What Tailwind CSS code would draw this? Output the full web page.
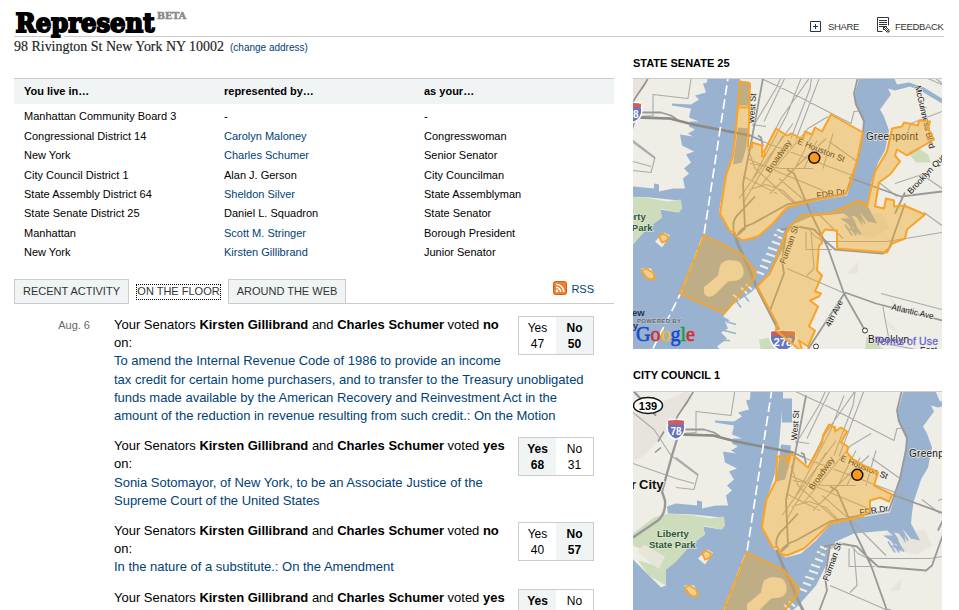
<!DOCTYPE html>
<html lang="en">
<head>
<meta charset="utf-8">
<title>Represent</title>
<script src="https://cdn.jsdelivr.net/npm/@tailwindcss/browser@4"></script>
</head>
<body class="bg-white text-black font-['Liberation_Sans',Arial,sans-serif] w-[959px] h-[610px] overflow-hidden">

<header class="ml-[14px] w-[930px] h-[37px] border-b border-[#ccc] flex justify-between">
  <svg class="overflow-visible" width="180" height="37" viewBox="0 0 180 37">
    <path d="M37 36.500h13" stroke="#fff" stroke-width="2"/>
    <text x="1.500" y="31.500" font-family="DejaVu Serif" font-weight="bold" font-size="25.500" textLength="139" lengthAdjust="spacingAndGlyphs" stroke="#000" stroke-width="1.900">Represent</text>
    <text x="143" y="18.500" font-family="DejaVu Serif" font-weight="bold" font-size="9.500" textLength="29" lengthAdjust="spacingAndGlyphs" fill="#888" stroke="#888" stroke-width=".5">BETA</text>
  </svg>
  <div class="flex items-start text-[9.5px] leading-[12px] tracking-[-0.35px] text-[#333]">
    <svg class="mt-[21px]" width="11" height="11" viewBox="0 0 11 11"><path d="M.5.5h10v10H.5z" fill="#fff" stroke="#333"/><path d="M3 5.500h5M5.500 3v5" stroke="#004276"/></svg>
    <span class="ml-[7px] mt-[21px] w-[49px]">SHARE</span>
    <svg class="mt-[17px]" width="13" height="16" viewBox="0 0 13 16"><path d="M5.500 14.500h-5V.5h11v8" fill="none" stroke="#333"/><path d="M2 3.500h8M2 5.500h8M2 7.500h8M2 9.500h4" stroke="#333"/><path d="M6 9.500h4M6.500 9v4M7 10l4.500 4.500M9 10l3 3v2h-2l-3-3" fill="none" stroke="#333"/></svg>
    <span class="ml-[5px] mt-[21px] w-[49px]">FEEDBACK</span>
  </div>
</header>

<div class="flex ml-[14px] h-[573px] overflow-hidden">
  <main class="w-[600px]">
    <div class="h-[41px] flex items-start text-[#333] pt-[1px]">
      <svg class="overflow-visible" width="216" height="18"><text x="0" y="13" font-family="Liberation Serif" font-size="14.500" fill="#222" stroke="#222" stroke-width=".15" textLength="210" lengthAdjust="spacingAndGlyphs">98 Rivington St New York NY 10002</text></svg>
      <a class="text-[10px] leading-[12px] mt-[4px] text-[#004276] whitespace-nowrap">(change address)</a>
    </div>

    <section class="text-[11px] h-[201px]">
      <div class="grid grid-cols-[200px_200px_1fr] h-[26px] border-t border-[#ccc] bg-[#f0f4f5] pl-[10px] font-bold leading-[25px] mb-[3px]">
        <span>You live in…</span><span>represented by…</span><span>as your…</span>
      </div>
      <div class="grid grid-cols-[200px_200px_1fr] pl-[10px] pt-[0.3px] leading-[19.4px]">
        <span>Manhattan Community Board 3</span><span>-</span><span>-</span>
        <span>Congressional District 14</span><span class="text-[#004276]">Carolyn Maloney</span><span>Congresswoman</span>
        <span>New York</span><span class="text-[#004276]">Charles Schumer</span><span>Senior Senator</span>
        <span>City Council District 1</span><span>Alan J. Gerson</span><span>City Councilman</span>
        <span>State Assembly District 64</span><span class="text-[#004276]">Sheldon Silver</span><span>State Assemblyman</span>
        <span>State Senate District 25</span><span>Daniel L. Squadron</span><span>State Senator</span>
        <span>Manhattan</span><span class="text-[#004276]">Scott M. Stringer</span><span>Borough President</span>
        <span>New York</span><span class="text-[#004276]">Kirsten Gillibrand</span><span>Junior Senator</span>
      </div>
    </section>

    <nav class="flex h-[25px] text-[11px] leading-[23px] text-[#333] whitespace-nowrap">
      <span class="w-[115px] border border-[#ccc] bg-[#f0f4f5] text-center">RECENT ACTIVITY</span>
      <span class="w-[99px] flex justify-center pt-[5px]"><span class="w-[85px] h-[16px] border border-dotted border-black text-center leading-[13px]">ON THE FLOOR</span></span>
      <span class="w-[118px] border border-[#ccc] bg-[#f0f4f5] text-center">AROUND THE WEB</span>
      <span class="grow border-b border-[#ccc] flex justify-end pr-[20px] text-[#004276]">
        <svg class="mt-[2px] mr-[4px]" width="14" height="14" viewBox="0 0 14 14"><rect x=".5" y=".5" width="13" height="13" rx="2" fill="#f08030" stroke="#d85c16"/><circle cx="4" cy="10" r="1.400" fill="#fff"/><path d="M3 6.300a4.700 4.700 0 0 1 4.700 4.700M3 3.200A7.800 7.800 0 0 1 10.800 11" fill="none" stroke="#fff" stroke-width="1.500"/></svg>
        <span class="leading-[20px]">RSS</span>
      </span>
    </nav>

    <section class="pt-[12px] text-[13px] leading-[18.2px] whitespace-nowrap">
      <article class="flex mb-[12px]">
        <time class="w-[76px] mr-[24px] text-right text-[11px] text-[#666]">Aug. 6</time>
        <div class="w-[404px] tracking-[-0.01px]">Your Senators <b>Kirsten Gillibrand</b> and <b>Charles Schumer</b> voted <b>no</b><br>on:<br>
          <a class="text-[#004276]">To amend the Internal Revenue Code of 1986 to provide an income<br>tax credit for certain home purchasers, and to transfer to the Treasury unobligated<br>funds made available by the American Recovery and Reinvestment Act in the<br>amount of the reduction in revenue resulting from such credit.: On the Motion</a></div>
        <div class="grid grid-cols-2 w-[76px] h-[39px] border border-[#ccc] text-[12px] leading-[16px] text-center"><span class="pt-[3px]">Yes<br>47</span><b class="pt-[3px] bg-[#f0f4f5]">No<br>50</b></div>
      </article>
      <article class="flex mb-[12px]">
        <div class="ml-[100px] w-[404px] tracking-[-0.01px]">Your Senators <b>Kirsten Gillibrand</b> and <b>Charles Schumer</b> voted <b>yes</b><br>on:<br>
          <a class="text-[#004276]">Sonia Sotomayor, of New York, to be an Associate Justice of the<br>Supreme Court of the United States</a></div>
        <div class="grid grid-cols-2 w-[76px] h-[39px] border border-[#ccc] text-[12px] leading-[16px] text-center"><b class="pt-[3px] bg-[#f0f4f5]">Yes<br>68</b><span class="pt-[3px]">No<br>31</span></div>
      </article>
      <article class="flex mb-[12px]">
        <div class="ml-[100px] w-[404px] tracking-[-0.01px]">Your Senators <b>Kirsten Gillibrand</b> and <b>Charles Schumer</b> voted <b>no</b><br>on:<br>
          <a class="text-[#004276]">In the nature of a substitute.: On the Amendment</a></div>
        <div class="grid grid-cols-2 w-[76px] h-[39px] border border-[#ccc] text-[12px] leading-[16px] text-center"><span class="pt-[3px]">Yes<br>40</span><b class="pt-[3px] bg-[#f0f4f5]">No<br>57</b></div>
      </article>
      <article class="flex">
        <div class="ml-[100px] w-[404px] tracking-[-0.01px]">Your Senators <b>Kirsten Gillibrand</b> and <b>Charles Schumer</b> voted <b>yes</b></div>
        <div class="grid grid-cols-2 w-[76px] h-[39px] border border-[#ccc] text-[12px] leading-[16px] text-center"><b class="pt-[3px] bg-[#f0f4f5]">Yes</b><span class="pt-[3px]">No</span></div>
      </article>
    </section>
  </main>

  <aside class="ml-[19px] w-[309px] pt-[19px] text-[11px] font-bold leading-[14px]">
    <h2 class="mb-[8px]">STATE SENATE 25</h2>
    <svg class="block border-t border-[#ccc]" width="309" height="271" viewBox="0 0.500 309 270" preserveAspectRatio="none" font-family="Liberation Sans">
      <defs>
        <g id="base">
          <rect x="-50" y="-10" width="370" height="450" fill="#eeede6"/>
          <!-- terrain shading -->
          <g fill="#dddbd3" opacity=".5"><path d="M-43 20L-10 5 12-5 16 3-2 24-15 42-32 60-43 66zM209 137l40-2 7 15-15 9-22-4zM214 195l12-12-2 12zM254 215l14 16-4 2zM252 240l12 12-5 0z"/></g>
          <path d="M18-5L9 10 12 5 2 20-1 26M-18 46L-12 36M-15 52l-6 5" fill="none" stroke="#8f8f8b" stroke-width="1.500"/>
          <!-- rivers -->
          <path fill="#99b2cf" d="M75-10 74 4 70 5 73 14 62 17 66 21 58 26 39 25 39 27 58 30 56 39 66 43 57 43 56 48 62 51 55 55 60 58 47 56 49 67 61 73 53 76 58 84 51 90 56 95 50 100 52 110 40 110 26 113 26 106 21 105 21 110 0 108-9 111-8 118 18 119 46 122 49 130 45 134 27 131 29 139 14 150 0 166-10 174-10 190-15 192-27 180-43 164-43 450 88 450 95 280 84 268 94 260 88 254 95 250 92 243 97 242 90 238 100 226 119 213 125 207 140 190 151 168 153 153 160 146 178 138 211 135 217 140 207 140 222 150 214 150 226 156 222 143 218 137 223 138 230 148 227 134 235 143 244 145 235 128 236 117 238 105 245 84 252 72 256 52 251 38 247 31 258 16 255 10 262 12 277 8 289 13 309 25 309 20 291 9 276 4 264 6 257-10 229-10 221 18 222 25 230 43 230 55 224 83 214 117 184 122 154 129 140 145 125 158 110 162 99 154 97 153 86 133 92 100 99 78 103 50 107 3 107-10z"/>
          <path fill="#eeede6" d="M71 213Q70 208 73 207L85 197Q86 190 88 185 94 180 100 182 106 182 108 185 112 191 110 197 108 201 104 202L95 203 83 215Q79 219 75 218 71 217 71 213zM22 163l9-9 6 3-8 12zM8 190l10 0 4 8-5 4zM107 41l8-1v8l-8 1zM106 43h-2v6h2z"/>
          <!-- piers -->
          <path stroke="#eeede6" stroke-width="2.200" d="M151 154l-7-3M149 160l-8-4M147 166l-8-3M144 172l-9-3M142 178l-9-3M138 184l-9-3M135 190l-8-3M131 196l-8-3M106 221l-6-5M114 215l-6-6M119 211l-6-5"/>
          <path stroke="#99b2cf" stroke-width="1.500" d="M93 243l10 3M91 252l12 3M87 262l10 0M103 222l5 7M111 217l5 6M212 146l7 11M216 145l7 12M220 144l8 12M225 133l7 12M228 131l8 12"/>
          <path fill="#99b2cf" d="M106 3h10v24h-10zM105 49l10 1-2 20-4 14-9 2z"/>
          <!-- parks -->
          <path fill="#cddcba" d="M-8 118L18 120 34 123 48 121 49 130 46 134 27 130 29 139 14 150 0 166-10 174-10 190-27 180-38 165-20 170-19 160-43 150-43 138-22 122zM275 74l9-5 11 7 3 8-15 0zM126 261l10-2 3-5 12 1 6 10-9 8-20 0zM233 258l9 5 14 13-24 0z"/>
          <path fill="#e5e5d8" d="M-39 156l7-7 21 12-6 13z"/>
          <!-- local streets -->
          <g fill="none" stroke="#aaa" stroke-width="1.100" stroke-linejoin="round">
            <path d="M6 38L20 37 20 16 55 20 59-6M0 62L22 79 18 94 0 92M-43 68L0 83 18 88M-43 17L-22 34-5 60 22 80M154 12L218 45 221 33 235 32M154 12L111-8M131 43L154-5 162-10M158 60L177 10 180-10M163 61L190-10M120 48L143 10 152-10M132 72L148 40 183-10M133 48L119 46M114 80L154 97 190 112M115 70L122 90 160 124M120 100L154 36 168 0M110 125L150 57M106 120L160 45M127 108L150 80 175 50 195 38M137 115L162 90 180 55M130 63L230 101M117 85L148 90 180 90M110 98L144 115M116 111L133 106 150 112 165 127M171 90L184 62M190 90L200 55M196 63L224 83M309 33L278 45 272 60M246 104L264 118M303 0L309 5M283-5L309 6M262 105L289 96 309 110M154 97L193 60M146 100L175 125 203 153 210 160M173 153L173 171 199 171M178 153L181 190 174 197M154 190L189 205 212 215M176 151L182 158 192 163 254 163 309 154M248 215L309 231M250 228L252 240 257 266 309 276M291 134L309 147M140 160L158 151M103 158L108 178"/>
          </g>
          <!-- avenues -->
          <g fill="none" stroke="#999" stroke-width="1.800" stroke-linejoin="round">
            <path d="M0 38L37 40 60 46 117 57 128 62M6 34L28 34 38 37 44 41M125 57L128 59 130 68M227-10L221 15 223 26 231 42 230 54 224 83M216 99L268 118 309 113M272 114L262 135M110 105L112 150 104 157M110 105L117 70 130 0M101 152Q98 142 107 134L122 118M105 155Q110 148 120 145L154 126 184 120 213 115 224 83M154 91L161 95 178 135 195 170 211 215 232 252M148 151L164 148 181 151 192 162 202 171 250 175 256 170 272 125M137 232L151 195 149 182 154 150M212 214L154 303M212 214L243 225 309 242"/>
            <path d="M-43 142L-18 125Q-10 118-11 105L-14 96 -4 60 3 37M-43-5L-20 20" stroke-width="2.400"/>
            <path d="M101 154Q105 168 113 183L122 205 145 250 155 270" stroke-width="3"/>
            <path d="M0 39L37 40 60 46 117 57" stroke="#8b8b88" stroke-width="2.500"/>
          </g>
          <path d="M96-7L71 156 47 216 15 280" fill="none" stroke="#fff" stroke-width="1.700" stroke-dasharray="10 4"/>
          <circle cx="232" cy="252" r="2.500" fill="#fff" stroke="#333"/><circle cx="183" cy="268" r="2.500" fill="#fff" stroke="#333"/>
          <!-- street and place names -->
          <g font-size="8.500" font-weight="400" fill="#111" stroke="#eeede6" stroke-width="1.300" paint-order="stroke">
            <text transform="translate(121 45) rotate(-86)" textLength="30" lengthAdjust="spacingAndGlyphs">West St</text>
            <text transform="translate(137 95) rotate(-55)" textLength="38" lengthAdjust="spacingAndGlyphs">Broadway</text>
            <text transform="translate(164 65) rotate(22)" textLength="50" lengthAdjust="spacingAndGlyphs">E Houston St</text>
            <text transform="translate(184 120) rotate(-9)" textLength="29" lengthAdjust="spacingAndGlyphs">FDR Dr</text>
            <text transform="translate(152 186) rotate(-70)" textLength="40" lengthAdjust="spacingAndGlyphs">Furman St</text>
            <text transform="translate(197 249) rotate(-63)" textLength="29" lengthAdjust="spacingAndGlyphs">4th Ave</text>
            <text transform="translate(258 231) rotate(13)" textLength="43" lengthAdjust="spacingAndGlyphs">Atlantic Ave</text>
            <text transform="translate(278 116) rotate(-47)" textLength="52" lengthAdjust="spacingAndGlyphs">Brooklyn Que</text>
            <text transform="translate(282 8) rotate(77)" textLength="64" lengthAdjust="spacingAndGlyphs">McGuinness Blvd</text>
            <text x="233" y="61" font-size="10" textLength="52">Greenpoint</text>
            <text x="235" y="264" font-size="10" textLength="41">Brooklyn</text>
            <text x="287" y="274">East</text>
          </g>
          <g font-weight="bold" font-size="9.500" fill="#2e5738" stroke="#dce6d0" stroke-width="1.500" paint-order="stroke"><text x="-19" y="141">Liberty</text><text x="-27" y="152">State Park</text></g>
          <g transform="translate(0 34)"><path d="M-7-10H7L9-3Q9 7 0 10-9 7-9-3z" fill="#6975bd" stroke="#fff" stroke-width="1.500"/><path d="M-8-9Q-4-7 0-10 4-7 8-9V-5H-8z" fill="#dc5757"/><text y="5" font-size="10" font-weight="bold" fill="#fff" text-anchor="middle">78</text></g>
          <g><ellipse cx="-28" cy="10" rx="14.500" ry="8" fill="#fff" stroke="#111" stroke-width="1.500"/><text x="-28" y="14" font-size="11" font-weight="bold" text-anchor="middle">139</text></g>
          <g transform="translate(150 262)"><path d="M-11-10H11L13-3Q12 7 0 11-12 7-13-3z" fill="#6975bd" stroke="#fff" stroke-width="1.500"/><path d="M-12-9Q-6-7 0-10 6-7 12-9V-5H-12z" fill="#dc5757"/><text y="5" font-size="11" font-weight="bold" fill="#fff" text-anchor="middle">278</text></g>
        </g>
        <g id="harbor" fill="#f0a820" fill-opacity=".42" stroke="#f9a426" stroke-width="1.800"><path d="M71 157L108 175 123 193 120 202 91 235 47 215zM26 158l4-3 5 3-1 4-5 2zM9 192l4-2 7 4 2 6-5 1-6-4z"/></g>
      </defs>
      <use href="#base"/>
      <g fill="#f0a820" fill-opacity=".42" stroke="#f9a426" stroke-width="2" stroke-linejoin="round">
        <path d="M107 3L117 5 116 43 115 68 119 69 119 64 129 67 129 78 132 77 131 73 143 50 154 57 159 55 166 59 170 60 172 53 179 56 182 49 189 53 198 36 230 54 224 83 217 107 212 116 184 121 154 129 140 145 125 158 110 162 103 158 101 153 97 153 87 135 93 97 100 77 103 50z"/>
        <path d="M106 29h11" fill="none"/>
        <path d="M124 208L137 195 155 150 169 137 197 135 227 122 234 128 242 93 254 73 259 50 269 48 271 44 285 47 286 42 297 43 295 50 301 61 274 77 264 71 262 77 267 83 257 96 246 104 242 128 251 130 253 120 261 122 261 128 271 127 292 136 274 151 272 160 259 165 254 174 204 170 204 152 192 151 188 157 189 165 186 167 184 192 189 197 182 213 188 215 186 218 177 222 185 228 176 248 182 252 175 268 166 262 170 274 143 252 144 245 137 232z"/>
      </g>
      <use href="#harbor"/>
      <circle cx="181.300" cy="79.300" r="5.500" fill="#ff9818" stroke="#111" stroke-width="1.500"/>
      <text x="4" y="244" font-size="6" font-weight="bold" fill="#666" stroke="#b9c7d6" stroke-width="1" paint-order="stroke" textLength="44">POWERED BY</text>
      <text x="-1" y="237" font-size="9.500" fill="#243550">ew</text><text x="0" y="250" font-size="9" fill="#243550">y</text>
      <g font-family="Liberation Serif" font-size="22" font-weight="normal" stroke-width=".6"><text x="3" y="262" textLength="59" lengthAdjust="spacingAndGlyphs"><tspan fill="#1749cf" stroke="#1749cf">G</tspan><tspan fill="#d92b2b" stroke="#d92b2b">o</tspan><tspan fill="#efbd18" stroke="#efbd18">o</tspan><tspan fill="#1749cf" stroke="#1749cf">g</tspan><tspan fill="#239a35" stroke="#239a35">l</tspan><tspan fill="#d92b2b" stroke="#d92b2b">e</tspan></text></g>
      <text x="242" y="266" font-size="10.500" font-weight="normal" fill="#6a68cf" stroke="#6a68cf" stroke-width=".3" textLength="63">Terms of Use</text>
    </svg>
    <h2 class="mt-[19px] mb-[9px]">CITY COUNCIL 1</h2>
    <svg class="block border-t border-[#ccc]" width="309" height="219" viewBox="-43 -3.500 309 218" preserveAspectRatio="none" font-family="Liberation Sans">
      <use href="#base"/>
      <g font-weight="bold" font-size="13" fill="#111" stroke="#eeede6" stroke-width="2" paint-order="stroke"><text x="-37" y="93">City</text><text x="-45" y="93" font-size="13">r</text></g>
      <path fill="#f0a820" fill-opacity=".42" stroke="#f9a426" stroke-width="2" stroke-linejoin="round" d="M153 29L159 32 159 36 165 32 171 36 165 47 172 51 171 57 176 63 188 70 202 77 198 90 216 99 213 106 204 102 194 105 194 116 186 121 154 128 140 142 128 153 111 160 104 158 102 152 97 152 86 132 90 105 100 85 101 61 112 61 112 69 115 58 132 72 146 47 147 40z"/>
      <use href="#harbor"/>
      <circle cx="181.300" cy="79.300" r="5.500" fill="#ff9818" stroke="#111" stroke-width="1.500"/>
    </svg>
  </aside>
</div>
</body>
</html>
